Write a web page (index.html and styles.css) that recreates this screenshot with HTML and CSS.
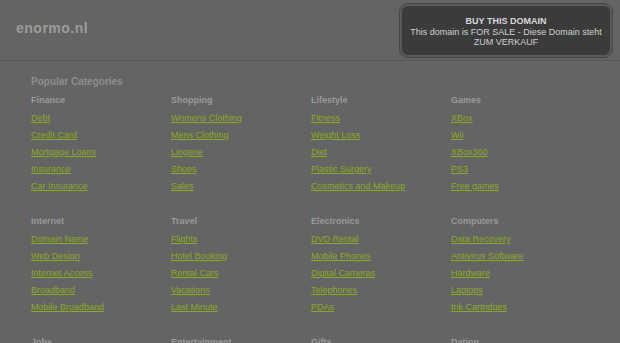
FILE: index.html
```html
<!DOCTYPE html>
<html lang="en">
<head>
    <meta charset="UTF-8">
    <title>enormo.nl</title>
    <link rel="stylesheet" href="styles.css">
</head>
<body>
    <div class="header">
        <div class="logo">enormo.nl</div>
        <div class="sale">
            <div class="sale-title">BUY THIS DOMAIN</div>
            <div class="sale-text">This domain is FOR SALE - Diese Domain steht ZUM VERKAUF</div>
        </div>
    </div>

    <div class="content">
        <h2>Popular Categories</h2>
        <div class="cats">
            <div class="cat">
                <h3>Finance</h3>
                <ul>
                    <li><a href="#">Debt</a></li>
                    <li><a href="#">Credit Card</a></li>
                    <li><a href="#">Mortgage Loans</a></li>
                    <li><a href="#">Insurance</a></li>
                    <li><a href="#">Car Insurance</a></li>
                </ul>
            </div>
            <div class="cat">
                <h3>Shopping</h3>
                <ul>
                    <li><a href="#">Womens Clothing</a></li>
                    <li><a href="#">Mens Clothing</a></li>
                    <li><a href="#">Lingerie</a></li>
                    <li><a href="#">Shoes</a></li>
                    <li><a href="#">Sales</a></li>
                </ul>
            </div>
            <div class="cat">
                <h3>Lifestyle</h3>
                <ul>
                    <li><a href="#">Fitness</a></li>
                    <li><a href="#">Weight Loss</a></li>
                    <li><a href="#">Diet</a></li>
                    <li><a href="#">Plastic Surgery</a></li>
                    <li><a href="#">Cosmetics and Makeup</a></li>
                </ul>
            </div>
            <div class="cat">
                <h3>Games</h3>
                <ul>
                    <li><a href="#">XBox</a></li>
                    <li><a href="#">Wii</a></li>
                    <li><a href="#">XBox360</a></li>
                    <li><a href="#">PS3</a></li>
                    <li><a href="#">Free games</a></li>
                </ul>
            </div>
            <div class="cat">
                <h3>Internet</h3>
                <ul>
                    <li><a href="#">Domain Name</a></li>
                    <li><a href="#">Web Design</a></li>
                    <li><a href="#">Internet Access</a></li>
                    <li><a href="#">Broadband</a></li>
                    <li><a href="#">Mobile Broadband</a></li>
                </ul>
            </div>
            <div class="cat">
                <h3>Travel</h3>
                <ul>
                    <li><a href="#">Flights</a></li>
                    <li><a href="#">Hotel Booking</a></li>
                    <li><a href="#">Rental Cars</a></li>
                    <li><a href="#">Vacations</a></li>
                    <li><a href="#">Last Minute</a></li>
                </ul>
            </div>
            <div class="cat">
                <h3>Electronics</h3>
                <ul>
                    <li><a href="#">DVD Rental</a></li>
                    <li><a href="#">Mobile Phones</a></li>
                    <li><a href="#">Digital Cameras</a></li>
                    <li><a href="#">Telephones</a></li>
                    <li><a href="#">PDAs</a></li>
                </ul>
            </div>
            <div class="cat">
                <h3>Computers</h3>
                <ul>
                    <li><a href="#">Data Recovery</a></li>
                    <li><a href="#">Antivirus Software</a></li>
                    <li><a href="#">Hardware</a></li>
                    <li><a href="#">Laptops</a></li>
                    <li><a href="#">Ink Cartridges</a></li>
                </ul>
            </div>
            <div class="cat">
                <h3>Jobs</h3>
            </div>
            <div class="cat">
                <h3>Entertainment</h3>
            </div>
            <div class="cat">
                <h3>Gifts</h3>
            </div>
            <div class="cat">
                <h3>Dating</h3>
            </div>
        </div>
    </div>
</body>
</html>
```

FILE: styles.css
```css
body {
    margin: 0;
    background-color: #646464;
    font-family: 'Liberation Sans', Arial, sans-serif;
    font-size: 9px;
    overflow: hidden;
}

.header {
    position: relative;
    height: 60px;
    border-bottom: 1px solid #575757;
}

.logo {
    padding: 19px 0 0 16px;
    font-size: 14px;
    font-weight: bold;
    letter-spacing: 0.5px;
    line-height: 18px;
    color: #9c9c9c;
}

.sale {
    position: absolute;
    top: 4px;
    left: 400px;
    width: 208px;
    height: 49px;
    background-color: #3b3b3b;
    border: 2px solid #5a5a5a;
    border-radius: 8px;
    box-shadow: 0 0 0 1px #474747;
    text-align: center;
    color: #d8d8d8;
}

.sale-title {
    margin-top: 9px;
    font-weight: bold;
    line-height: 12px;
}

.sale-text {
    padding: 0 8px;
    line-height: 10px;
    color: #cfcfcf;
}

.content {
    padding: 12px 0 0 31px;
}

h2 {
    margin: 0;
    font-size: 10px;
    line-height: 18px;
    color: #8e8e8e;
}

.cats {
    display: grid;
    grid-template-columns: repeat(4, 140px);
    row-gap: 17px;
}

h3 {
    margin: 0;
    font-size: 9px;
    line-height: 19px;
    color: #9a9a9a;
}

ul {
    list-style: none;
    margin: 0;
    padding: 0;
}

li {
    line-height: 17px;
}

a {
    color: #8aab1f;
}
```
